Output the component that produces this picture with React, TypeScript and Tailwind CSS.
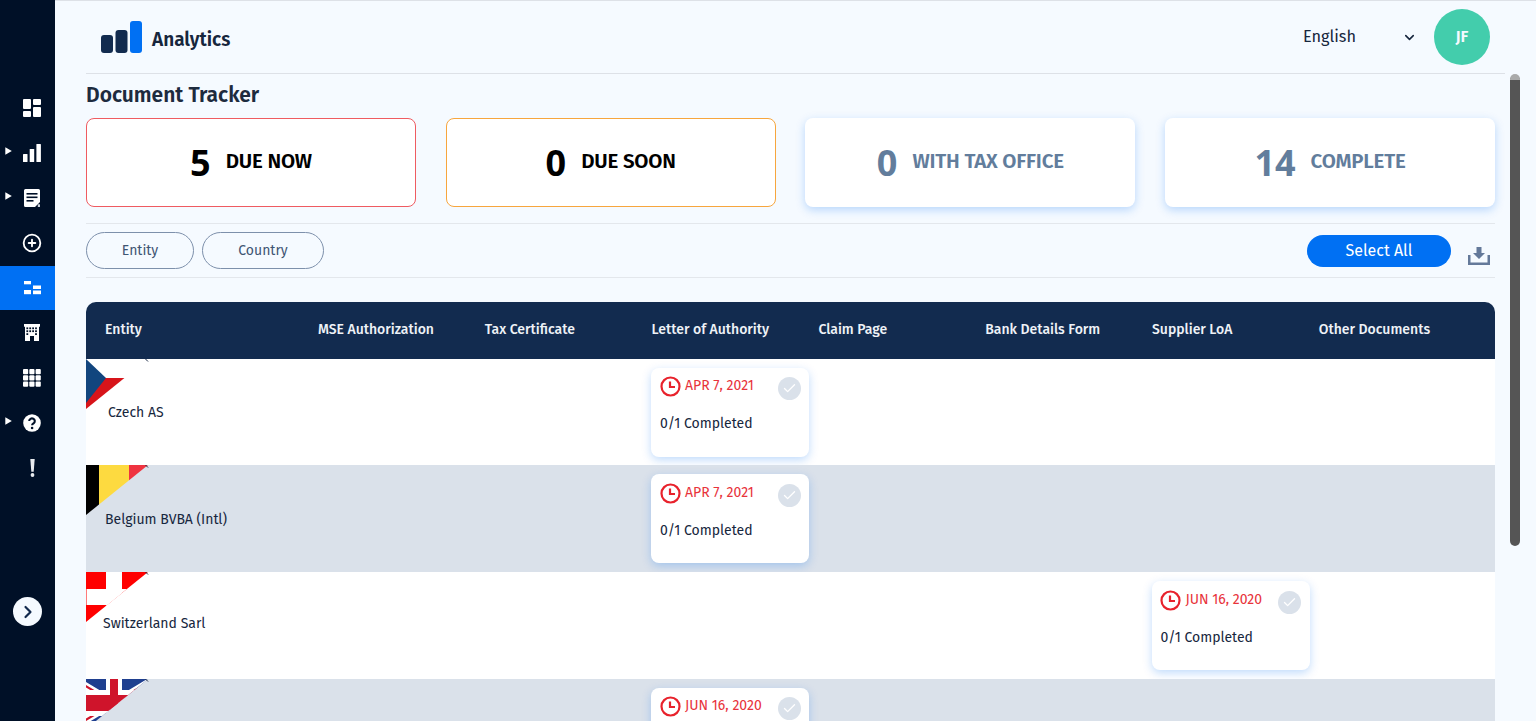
import React from "react";
import { Check, ChevronDown, ChevronRight, CirclePlus } from "lucide-react";

function Dash() {
  return (
    <svg width="18" height="18" viewBox="0 0 18 18" fill="#fff">
      <rect x="0" y="0" width="8" height="10" rx="1" />
      <rect x="10" y="0" width="8" height="6" rx="1" />
      <rect x="0" y="12" width="8" height="6" rx="1" />
      <rect x="10" y="8" width="8" height="10" rx="1" />
    </svg>
  );
}
function Bars() {
  return (
    <svg width="18" height="18" viewBox="0 0 18 18" fill="#fff">
      <rect x="0" y="10" width="4.5" height="8" rx="0.6" />
      <rect x="6.7" y="5" width="4.5" height="13" rx="0.6" />
      <rect x="13.4" y="0" width="4.5" height="18" rx="0.6" />
    </svg>
  );
}
function Doc() {
  return (
    <svg width="18" height="18" viewBox="0 0 18 18">
      <path d="M2.5 0h13A1.5 1.5 0 0 1 17 1.5V13l-5 5H2.5A1.5 1.5 0 0 1 1 16.500V1.500A1.500 1.500 0 0 1 2.500 0z" fill="#fff" />
      <rect x="3.500" y="4" width="11" height="1.600" fill="#001027" />
      <rect x="3.500" y="7.500" width="11" height="1.600" fill="#001027" />
      <rect x="3.500" y="11" width="7" height="1.600" fill="#001027" />
      <path d="M14.800 15.300h2.200v2.700h-2.200z" fill="#cfd6df" />
    </svg>
  );
}
function Tracker() {
  return (
    <svg width="17" height="14" viewBox="0 0 17 14" fill="#fff">
      <rect x="0" y="0" width="7" height="3.300" />
      <rect x="9" y="4.500" width="8" height="3.500" />
      <rect x="0" y="9" width="7" height="4.200" />
      <rect x="9" y="9.500" width="8" height="3.700" />
    </svg>
  );
}
function Building() {
  const cells = [];
  for (let r = 0; r < 3; r++)
    for (let c = 0; c < 4; c++)
      if (r < 2 || c === 0 || c === 3)
        cells.push(<rect key={`${r}${c}`} x={2.400 + c * 2.900} y={3.400 + r * 2.900} width="1.800" height="1.800" fill="#001027" />);
  return (
    <svg width="16" height="17" viewBox="0 0 16 17">
      <path d="M0 0h16v2.500l-1 .5V17H10v-5H6v5H1V3L0 2.500z" fill="#fff" />
      {cells}
    </svg>
  );
}
function Apps() {
  const cells = [];
  for (let r = 0; r < 3; r++)
    for (let c = 0; c < 3; c++)
      cells.push(<rect key={`${r}${c}`} x={c * 6.300} y={r * 6.300} width="5.200" height="5.200" rx="1" />);
  return (
    <svg width="18" height="18" viewBox="0 0 18 18" fill="#fff">
      {cells}
    </svg>
  );
}
function Help() {
  return (
    <svg width="18" height="18" viewBox="0 0 18 18">
      <circle cx="9" cy="9" r="8.800" fill="#fff" />
      <path d="M6.200 7.100a2.800 2.700 0 1 1 4.400 2.200c-1 .7-1.500 1-1.500 2" fill="none" stroke="#001027" strokeWidth="2.100" />
      <circle cx="9.100" cy="14" r="1.300" fill="#001027" />
    </svg>
  );
}
function Bang() {
  return (
    <svg width="5" height="18" viewBox="0 0 5 18" fill="#e8ebef">
      <path d="M0.300 0h4.400l-1 12.800h-2.400z" />
      <circle cx="2.500" cy="16" r="1.900" />
    </svg>
  );
}
function Arrow() {
  return (
    <svg width="7" height="8" viewBox="0 0 7 8" fill="#fff">
      <path d="M0.300 0.300L6.800 4L0.300 7.700z" />
    </svg>
  );
}

const navItems = [
  { icon: <Dash /> },
  { icon: <Bars />, arrow: true },
  { icon: <Doc />, arrow: true },
  { icon: <CirclePlus size={20} color="#fff" strokeWidth={2.200} /> },
  { icon: <Tracker />, active: true },
  { icon: <Building /> },
  { icon: <Apps /> },
  { icon: <Help />, arrow: true },
  { icon: <Bang /> },
];

function Sidebar() {
  return (
    <aside className="relative flex h-full w-[55px] shrink-0 flex-col bg-[#001027] pt-[85px]">
      {navItems.map((n, i) => (
        <div key={i} className="relative flex h-[45px] items-center justify-center pl-[9px]">
          {n.active && <span className="absolute inset-x-0 top-[1px] bottom-0 bg-[#0070f3]" />}
          {n.arrow && (
            <span className="absolute left-[5px] top-[17px] flex">
              <Arrow />
            </span>
          )}
          <span className="relative flex">{n.icon}</span>
        </div>
      ))}
      <div className="absolute left-[13px] top-[597px] flex h-[29px] w-[29px] items-center justify-center rounded-full bg-[#f5faff]">
        <ChevronRight size={20} color="#12294d" strokeWidth={2.600} />
      </div>
    </aside>
  );
}

function Stat({ n, label, kind }: { n: string; label: string; kind: "red" | "orange" | "plain" }) {
  const box =
    kind === "red"
      ? "border border-[#ef5b61]"
      : kind === "orange"
        ? "border border-[#f7a63e]"
        : "shadow-[0_3px_10px_rgba(0,112,243,0.25)]";
  const color = kind === "plain" ? "text-[#627d9c]" : "text-black";
  return (
    <div className={`flex h-[89px] items-center justify-center gap-[15px] rounded-[8px] bg-white ${box} ${color}`}>
      <span className="font-['Open_Sans',sans-serif] text-[36px] font-bold leading-none">{n}</span>
      <span className="mb-[2px] text-[20.500px] font-semibold tracking-[-0.2px]">{label}</span>
    </div>
  );
}

function ClockCard({ date }: { date: string }) {
  return (
    <div className="mt-[9px] ml-[18.800px] flex h-[89px] w-[158px] flex-col rounded-[8px] bg-white px-[8.600px] pt-[8.500px] shadow-[0_3px_10px_rgba(0,112,243,0.25)]">
      <div className="flex items-start gap-[4px]">
        <svg width="21" height="21" viewBox="0 0 21 21" fill="none" stroke="#e8222c" strokeWidth="2.200">
          <circle cx="10.500" cy="10.500" r="9" />
          <path d="M10 5.500v5.500h5" />
        </svg>
        <span className="text-[14px] leading-[19px] text-[#e8333b]">{date}</span>
        <span className="mt-[1px] ml-auto flex h-[23px] w-[23px] items-center justify-center rounded-full bg-[#dae1ea]">
          <Check size={15} color="#fff" strokeWidth={2.200} />
        </span>
      </div>
      <div className="mt-[13px] text-[14px] text-[#16263d]">0/1 Completed</div>
    </div>
  );
}

function FlagCZ() {
  return (
    <>
      <path d="M0 0H62V50H0z" fill="#fff" />
      <path d="M0 19H62V50H0z" fill="#d7141a" />
      <path d="M0 0L20 19L0 44z" fill="#11457e" />
    </>
  );
}
function FlagBE() {
  return (
    <>
      <rect x="0" y="0" width="13" height="50" fill="#000" />
      <rect x="13" y="0" width="30" height="50" fill="#fdda40" />
      <rect x="43" y="0" width="20" height="50" fill="#ef3340" />
    </>
  );
}
function FlagCH() {
  return (
    <>
      <rect x="0" y="0" width="62" height="50" fill="#ff0000" />
      <rect x="20" y="0" width="16" height="50" fill="#fff" />
      <rect x="0" y="17" width="62" height="16" fill="#fff" />
      <rect x="0" y="17" width="1" height="16" fill="#ff7a7a" />
    </>
  );
}
function FlagUK() {
  return (
    <>
      <rect x="0" y="0" width="62" height="50" fill="#1f3f8f" />
      <path d="M-22 -6L78 54M78 -6L-22 54" stroke="#fff" strokeWidth="7" />
      <path d="M-22 -6L78 54M78 -6L-22 54" stroke="#cf142b" strokeWidth="2.200" />
      <rect x="20" y="0" width="16" height="50" fill="#fff" />
      <rect x="0" y="11" width="62" height="26" fill="#fff" />
      <rect x="24" y="0" width="8" height="50" fill="#cf142b" />
      <rect x="0" y="16" width="62" height="16" fill="#cf142b" />
    </>
  );
}

function Flag({ children, id }: { children: React.ReactNode; id: string }) {
  return (
    <svg className="absolute left-0 top-0" width="63" height="51" viewBox="0 0 63 51">
      <clipPath id={id}>
        <path d="M0 0H62L0 50z" />
      </clipPath>
      <g clipPath={`url(#${id})`}>{children}</g>
      <path d="M59.500 0L62 2.500" stroke="#1b2a44" strokeWidth="1" />
    </svg>
  );
}

const columns = [
  "Entity",
  "MSE Authorization",
  "Tax Certificate",
  "Letter of Authority",
  "Claim Page",
  "Bank Details Form",
  "Supplier LoA",
  "Other Documents",
];

const rows = [
  { name: "Czech AS", id: "cz", flag: <FlagCZ />, pad: "pl-[22px] pt-[1px]", bg: "bg-white", col: 3, date: "APR 7, 2021" },
  { name: "Belgium BVBA (Intl)", id: "be", flag: <FlagBE />, pad: "pl-[19px] pt-[2px]", bg: "bg-[#dae1ea]", col: 3, date: "APR 7, 2021" },
  { name: "Switzerland Sarl", id: "ch", flag: <FlagCH />, pad: "pl-[17px] pb-[4px]", bg: "bg-white", col: 6, date: "JUN 16, 2020" },
  { name: "", id: "uk", flag: <FlagUK />, pad: "pl-[17px]", bg: "bg-[#dae1ea]", col: 3, date: "JUN 16, 2020" },
];

const gridCols = "grid grid-cols-[213px_repeat(6,166.800px)_1fr]";

function Table() {
  return (
    <div className="mt-[24px]">
      <div className={`${gridCols} h-[56.500px] items-center rounded-t-[10px] bg-[#122b4f] pb-[2px] text-[14px] font-medium text-[#eef2f7]`}>
        {columns.map((c) => (
          <div key={c} className="pl-[19px]">
            {c}
          </div>
        ))}
      </div>
      {rows.map((r) => (
        <div key={r.id} className={`relative ${gridCols} h-[106.800px] ${r.bg}`}>
          <Flag id={r.id}>{r.flag}</Flag>
          {columns.map((c, i) => (
            <div key={c} className={i === 0 ? `flex items-center text-[14px] text-[#16263d] ${r.pad}` : ""}>
              {i === 0 ? r.name : i === r.col ? <ClockCard date={r.date} /> : null}
            </div>
          ))}
        </div>
      ))}
    </div>
  );
}

export default function App() {
  return (
    <div className="flex h-screen w-full overflow-hidden bg-[#f5faff] font-['Fira_Sans','Roboto',sans-serif]">
      <Sidebar />
      <main className="relative flex min-w-0 flex-1 flex-col border-t border-[#dde1e7] pl-[31px] pr-[41px]">
        <header className="mr-[-10px] flex h-[73px] shrink-0 items-center border-b border-[#dde1e7] pr-[15px] pl-[15px]">
          <svg width="41" height="32" viewBox="0 0 41 32">
            <rect x="0" y="14" width="12" height="18" rx="3" fill="#122b4f" />
            <rect x="14.500" y="9" width="12" height="23" rx="3" fill="#122b4f" />
            <rect x="29" y="0" width="12" height="32" rx="3" fill="#0070f3" />
          </svg>
          <span className="mt-[6px] ml-[10px] text-[19px] font-semibold text-[#16263d]">Analytics</span>
          <span className="ml-auto text-[16.300px] text-[#16263d]">English</span>
          <ChevronDown className="ml-[46px]" size={15} color="#16263d" strokeWidth={2.500} />
          <div className="ml-[17px] flex h-[56px] w-[56px] items-center justify-center rounded-full bg-[#43cdac] text-[16px] font-semibold text-[#f5faff]">
            JF
          </div>
        </header>
        <h1 className="mt-[6px] text-[21px] leading-[30px] font-semibold text-[#1d2b3e]">Document Tracker</h1>
        <section className="mt-[8px] grid grid-cols-4 gap-[29.670px]">
          <Stat n="5" label="DUE NOW" kind="red" />
          <Stat n="0" label="DUE SOON" kind="orange" />
          <Stat n="0" label="WITH TAX OFFICE" kind="plain" />
          <Stat n="14" label="COMPLETE" kind="plain" />
        </section>
        <div className="mt-[16px] flex h-[55px] shrink-0 items-center border-y border-[#e3e7ec]">
          <button className="h-[37px] w-[108px] rounded-full border border-[#7d90ab] text-[14px] text-[#3e5573]">Entity</button>
          <button className="ml-[8px] h-[37px] w-[122px] rounded-full border border-[#7d90ab] text-[14px] text-[#3e5573]">Country</button>
          <button className="ml-auto h-[32px] w-[144px] rounded-full bg-[#0070f3] text-[16px] text-white">Select All</button>
          <svg className="ml-[17px] mr-[5px] mt-[10px]" width="22" height="18" viewBox="0 0 22 18" fill="#64799a">
            <path d="M8.500 0h5v6h3.500L11 12L5 6h3.500z" />
            <path d="M0 8h2.500v7.500h17V8H22v10H0z" />
          </svg>
        </div>
        <Table />
        <div className="absolute left-[1455px] top-[73px] h-[472px] w-[10px] rounded-full border-t-[6px] border-t-[#aaa] bg-[#555]" />
      </main>
    </div>
  );
}
